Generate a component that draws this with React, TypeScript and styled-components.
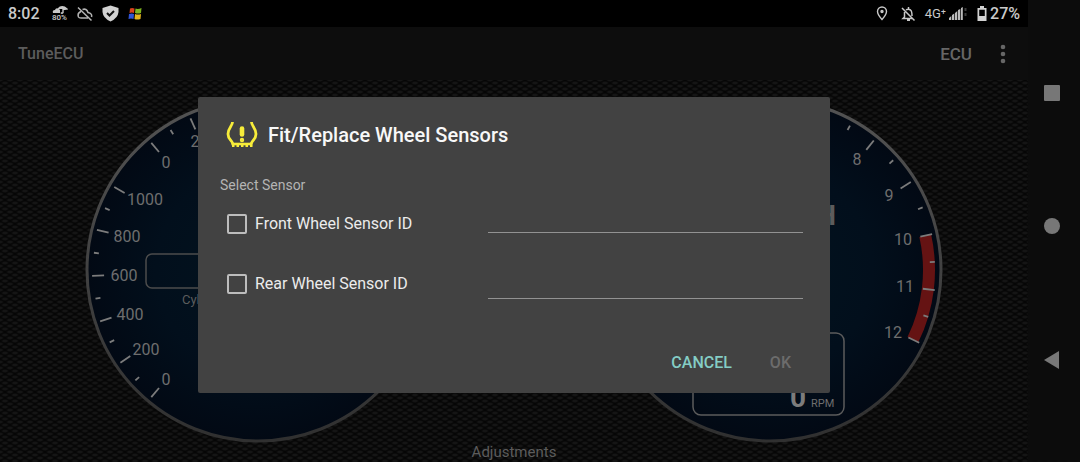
import React from "react";
import styled, { createGlobalStyle } from "styled-components";

const GlobalStyle = createGlobalStyle`
  *, *::before, *::after { box-sizing: border-box; }
  body {
    margin: 0;
    background: #0c0c0c;
    font-family: Roboto, "Liberation Sans", sans-serif;
  }
  button { font-family: inherit; }
`;

const Screen = styled.div`
  display: flex;
  min-height: 100vh;
`;

const AppArea = styled.div`
  flex: 1;
  min-width: 0;
  display: flex;
  flex-direction: column;
`;

const StatusBar = styled.header`
  display: flex;
  align-items: center;
  justify-content: space-between;
  height: 27px;
  padding: 0 8px;
  background: #000;
  color: #cacaca;
`;

const StatusGroup = styled.div<{ $gap: number }>`
  display: flex;
  align-items: center;
  gap: ${(p) => p.$gap}px;
`;

const StatusText = styled.span<{ $small?: boolean }>`
  font-size: ${(p) => (p.$small ? 13 : 16)}px;
  line-height: 20px;
  font-weight: ${(p) => (p.$small ? 400 : 500)};
`;

const Weather = styled.span`
  display: flex;
  flex-direction: column;
  align-items: center;
  font-size: 8px;
  line-height: 8px;
  font-weight: 500;
`;

const Signal = styled.span`
  display: flex;
  align-items: center;
  gap: 3px;
`;

const Body = styled.div`
  position: relative;
  flex: 1;
  display: flex;
  flex-direction: column;
`;

const Toolbar = styled.div`
  display: flex;
  align-items: center;
  justify-content: space-between;
  height: 53px;
  padding: 0 16px 0 18px;
  background: #0d0d0d;
`;

const AppTitle = styled.h1`
  margin: 0;
  font-size: 16px;
  line-height: 20px;
  font-weight: 500;
  color: #5c5c5c;
`;

const ToolbarActions = styled.div`
  display: flex;
  align-items: center;
  gap: 22px;
`;

const BareButton = styled.button`
  display: flex;
  align-items: center;
  padding: 0;
  border: 0;
  background: none;
  color: #666;
  font-size: 17px;
  line-height: 20px;
  font-weight: 500;
`;

const Dashboard = styled.main`
  flex: 1;
  display: flex;
  flex-direction: column;
  align-items: center;
  padding-top: 17px;
  background-color: #060606;
  background-image:
    radial-gradient(ellipse 4px 2px at 50% 50%, #151515 40%, transparent 100%),
    radial-gradient(ellipse 4px 2px at 50% 50%, #151515 40%, transparent 100%);
  background-size: 10px 6px;
  background-position: 0 0, 5px 3px;
`;

const Gauges = styled.div`
  display: flex;
  justify-content: center;
  gap: 166px;
`;

const Dial = styled.svg`
  display: block;
  flex: none;
  width: 346px;
  height: 346px;
  font-family: Roboto, sans-serif;
`;

const Caption = styled.p`
  margin: 0;
  font-size: 15px;
  line-height: 18px;
  color: #5c5c5c;
`;

const Overlay = styled.div`
  position: absolute;
  inset: 0;
  display: flex;
  align-items: center;
  justify-content: center;
`;

const Dialog = styled.form`
  display: flex;
  flex-direction: column;
  width: 632px;
  max-width: 96%;
  padding: 22px 27px 12px 22px;
  border-radius: 2px;
  background: #424242;
`;

const DialogHeader = styled.div`
  display: flex;
  align-items: center;
  gap: 10px;
  height: 32px;
  padding-left: 6px;
`;

const DialogTitle = styled.h2`
  margin: 0;
  font-size: 20px;
  line-height: 24px;
  font-weight: 500;
  color: #f8f8f8;
`;

const Hint = styled.p`
  margin: 24px 0 0;
  font-size: 14px;
  line-height: 20px;
  color: #b4b4b4;
`;

const Fields = styled.div`
  display: grid;
  grid-template-columns: 268px 1fr;
  margin-top: 9px;
`;

const FieldColumn = styled.div<{ $gap: number }>`
  display: flex;
  flex-direction: column;
  gap: ${(p) => p.$gap}px;
`;

const CheckLabel = styled.label`
  display: flex;
  align-items: center;
  gap: 8px;
  height: 40px;
  padding-left: 7px;
  font-size: 16px;
  line-height: 20px;
  color: #ececec;
`;

const CheckBox = styled.input`
  appearance: none;
  width: 20px;
  height: 20px;
  margin: 0;
  border: 2px solid #bdbdbd;
  border-radius: 2px;
  &:checked { background: #80cbc4; }
`;

const SensorInput = styled.input`
  width: 100%;
  height: 29px;
  padding: 0;
  border: 0;
  border-bottom: 1px solid #929292;
  outline: none;
  background: none;
  color: #ececec;
  font: 16px Roboto, sans-serif;
`;

const DialogActions = styled.div`
  display: flex;
  justify-content: flex-end;
  gap: 38px;
  margin-top: 41px;
  padding-right: 12px;
`;

const ActionButton = styled.button`
  height: 36px;
  padding: 0;
  border: 0;
  background: none;
  color: #84cdc5;
  font-size: 16px;
  line-height: 20px;
  font-weight: 500;
  &:disabled { color: #6c6c6c; }
`;

const NavBar = styled.nav`
  flex: none;
  display: flex;
  flex-direction: column;
  justify-content: space-between;
  align-items: center;
  width: 52px;
  padding: 82px 4px 90px 0;
  background: #0c0c0c;
`;

const NavButton = styled.button`
  display: flex;
  padding: 2px;
  border: 0;
  background: none;
`;

const C = 173;

function polar(deg: number, r: number) {
  const a = (deg * Math.PI) / 180;
  return { x: C + r * Math.cos(a), y: C - r * Math.sin(a) };
}

function Tick({ deg, minor }: { deg: number; minor?: boolean }) {
  const outer = polar(deg, minor ? 165 : 166);
  const inner = polar(deg, minor ? 160 : 154);
  return (
    <line x1={outer.x} y1={outer.y} x2={inner.x} y2={inner.y} stroke="#7c7c7c" strokeWidth="1.8" />
  );
}

type Mark = { text: string; x: number; y: number };

function Face({ id, major, minor, marks, children }: {
  id: string;
  major: number[];
  minor: number[];
  marks: Mark[];
  children?: React.ReactNode;
}) {
  return (
    <Dial viewBox="0 0 346 346" aria-hidden="true">
      <defs>
        <radialGradient id={id + "-face"}>
          <stop offset="0" stopColor="#02131f" />
          <stop offset="0.6" stopColor="#020f1c" />
          <stop offset="1" stopColor="#020914" />
        </radialGradient>
        <linearGradient id={id + "-rim"} x1="0" y1="0" x2="0" y2="1">
          <stop offset="0" stopColor="#535353" />
          <stop offset="1" stopColor="#303030" />
        </linearGradient>
      </defs>
      <circle cx={C} cy={C} r="171" fill={`url(#${id}-face)`} stroke={`url(#${id}-rim)`} strokeWidth="3" />
      {children}
      {major.map((d) => <Tick key={d} deg={d} />)}
      {minor.map((d) => <Tick key={d} deg={d} minor />)}
      {marks.map((m) => (
        <text key={m.text + m.y} x={m.x} y={m.y} fontSize="16" fill="#6e6e6e" textAnchor="middle">
          {m.text}
        </text>
      ))}
    </Dial>
  );
}

const leftMarks: Mark[] = [
  { text: "200", x: 119, y: 50 },
  { text: "0", x: 81, y: 71 },
  { text: "1000", x: 60, y: 108 },
  { text: "800", x: 42, y: 145 },
  { text: "600", x: 39, y: 184 },
  { text: "400", x: 45, y: 223 },
  { text: "200", x: 61, y: 258 },
  { text: "0", x: 81, y: 288 },
];

const rightMarks: Mark[] = [
  { text: "8", x: 260, y: 68 },
  { text: "9", x: 292, y: 104 },
  { text: "10", x: 306, y: 148 },
  { text: "11", x: 308, y: 195 },
  { text: "12", x: 296, y: 241 },
];

function RedZone() {
  const a = polar(12.5, 159);
  const b = polar(-26, 159);
  return (
    <path d={`M${a.x} ${a.y} A159 159 0 0 1 ${b.x} ${b.y}`} fill="none" stroke="#651313" strokeWidth="12" />
  );
}

function TyreIcon() {
  return (
    <svg width="32" height="30" viewBox="0 0 32 30" fill="none" stroke="#f7ec3a" aria-hidden="true">
      <path d="M6.500 2 C6.500 6 2 8 2 14 C2 19 5.500 20 7 24 M25.500 2 C25.500 6 30 8 30 14 C30 19 26.500 20 25 24" strokeWidth="2.800" />
      <path d="M5.500 24 H26.500" strokeWidth="2.600" />
      <path d="M6 26 H26.500" strokeWidth="2" strokeDasharray="2.500 2" />
      <path d="M16 8.500 V14.500" strokeWidth="4.600" strokeLinecap="round" />
      <circle cx="16" cy="20" r="1.200" strokeWidth="2" />
    </svg>
  );
}

const sensors = [
  { id: "front", label: "Front Wheel Sensor ID" },
  { id: "rear", label: "Rear Wheel Sensor ID" },
];

export default function App() {
  return (
    <>
      <GlobalStyle />
      <Screen>
        <AppArea>
          <StatusBar>
            <StatusGroup $gap={12}>
              <StatusText>8:02</StatusText>
              <StatusGroup $gap={9}>
                <Weather>
                  <svg width="16" height="8" viewBox="0 0 16 8" aria-hidden="true">
                    <path d="M1 7 Q0 4 3 4 Q4 1 7 3 L8 4 V7Z" fill="#c8c8c8" />
                    <path d="M6 3 Q10 -1.500 15 3 L11 3.500 V6.500 Q10 8 9 6.500" fill="none" stroke="#c8c8c8" strokeWidth="1.400" />
                    <path d="M6 3 Q10 -1.500 15 3Z" fill="#c8c8c8" />
                  </svg>
                  80%
                </Weather>
                <svg width="16" height="16" viewBox="0 0 16 16" fill="none" stroke="#b4b4b4" strokeWidth="1.500" aria-hidden="true">
                  <path d="M1 1.500 L14.500 14.500 M5.500 3.500 Q9.500 2 11 6.500 Q15.500 7.500 14.500 11 M4 5.500 Q0 7 1.500 11 Q2 12 4 12 H11" />
                </svg>
                <svg width="17" height="17" viewBox="0 0 17 17" aria-hidden="true">
                  <path d="M8.500 .500 L16.500 3 V7 Q16 13 8.500 16.500 Q1 13 .500 7 V3Z" fill="#d2d2d2" />
                  <path d="M5 8 L7.500 10.500 L12 6" fill="none" stroke="#111" strokeWidth="2" />
                </svg>
                <svg width="14" height="13" viewBox="0 0 14 13" aria-hidden="true">
                  <path d="M2 1.500 Q4 .500 6.500 1.500 L6 6 Q4 5 1.500 6Z" fill="#d8421d" />
                  <path d="M7.500 1.500 Q10 2.500 13.500 1 L13 6 Q10 7 7 6Z" fill="#7fb51f" />
                  <path d="M1 7 Q4 6 6 7 L5.500 12 Q3 11 .500 12Z" fill="#3154d6" />
                  <path d="M7 7 Q10 8 13 7 L12.500 12 Q9 13 6.500 12Z" fill="#e4b41d" />
                </svg>
              </StatusGroup>
            </StatusGroup>
            <StatusGroup $gap={9}>
              <StatusGroup $gap={13}>
                <svg width="12" height="15" viewBox="0 0 12 15" fill="none" stroke="#c8c8c8" strokeWidth="1.400" aria-hidden="true">
                  <path d="M6 13.500 Q1.500 8.500 1.500 5.500 A4.500 4.500 0 0 1 10.500 5.500 Q10.500 8.500 6 13.500Z" />
                  <circle cx="6" cy="5.500" r="1" fill="#c8c8c8" />
                </svg>
                <svg width="15" height="16" viewBox="0 0 15 16" fill="none" stroke="#c8c8c8" strokeWidth="1.500" aria-hidden="true">
                  <path d="M1 2 L13.500 14.500 M5 4 Q7 2.500 9.500 4 Q11 5 11 10 M3.500 6 V11 L2 12.500 H11 M7.500 1 V3" />
                  <path d="M6 14 H9" strokeWidth="2" />
                </svg>
              </StatusGroup>
              <Signal>
                <StatusText $small>4G⁺</StatusText>
                <svg width="19" height="15" viewBox="0 0 19 15" aria-hidden="true">
                  <path d="M0 14 V12 L2.300 10 V14Z M3 14 V9 L5.300 7.500 V14Z M6 14 V7 L8.300 5 V14Z M9 14 V4 L11.300 3 V14Z M12 14 V2 L13.800 1 V14Z" fill="#bcbcbc" />
                  <path d="M16.500 2 V5 M16.500 7 V10" stroke="#3c3c3c" strokeWidth="2" />
                </svg>
              </Signal>
              <Signal>
                <svg width="10" height="15" viewBox="0 0 10 15" aria-hidden="true">
                  <path d="M3 0 H7 V2 H9.500 V15 H.500 V2 H3Z M2.200 3.700 V10 H7.800 V3.700Z" fill="#d2d2d2" fillRule="evenodd" />
                </svg>
                <StatusText>27%</StatusText>
              </Signal>
            </StatusGroup>
          </StatusBar>
          <Body>
            <Toolbar>
              <AppTitle>TuneECU</AppTitle>
              <ToolbarActions>
                <BareButton type="button">ECU</BareButton>
                <BareButton type="button" aria-label="More options">
                  <svg width="18" height="20" viewBox="0 0 18 20" fill="#666">
                    <circle cx="9" cy="3" r="2.300" />
                    <circle cx="9" cy="10" r="2.300" />
                    <circle cx="9" cy="17" r="2.300" />
                  </svg>
                </BareButton>
              </ToolbarActions>
            </Toolbar>
            <Dashboard>
              <Gauges>
                <Face
                  id="pressure"
                  major={[114, 130, 150, 166, 182, 198, 214, 230]}
                  minor={[122, 158, 174, 190, 206, 222]}
                  marks={leftMarks}
                >
                  <rect x="61" y="157" width="224" height="34" rx="6" fill="none" stroke="#4c4c4c" strokeWidth="1.500" />
                  <text x="97" y="207" fontSize="13" fill="#5c5c5c">Cylinder</text>
                </Face>
                <Face
                  id="rpm"
                  major={[51.3, 32, 12.5, -7, -26]}
                  minor={[61, 41.7, 22.3, 2.8, -16.5]}
                  marks={rightMarks}
                >
                  <RedZone />
                  <text x="239" y="128" fontSize="28" fontWeight="700" fill="#5c5c5c" textAnchor="end">H</text>
                  <rect x="96" y="236" width="151" height="82" rx="8" fill="none" stroke="#5c5c5c" strokeWidth="1.500" />
                  <text x="193" y="310" fontSize="28" fontWeight="700" fill="#7c7c7c">0</text>
                  <text x="214" y="310" fontSize="11" fill="#6e6e6e">RPM</text>
                </Face>
              </Gauges>
              <Caption>Adjustments</Caption>
            </Dashboard>
            <Overlay>
              <Dialog role="dialog" aria-labelledby="dialog-title">
                <DialogHeader>
                  <TyreIcon />
                  <DialogTitle id="dialog-title">Fit/Replace Wheel Sensors</DialogTitle>
                </DialogHeader>
                <Hint>Select Sensor</Hint>
                <Fields>
                  <FieldColumn $gap={20}>
                    {sensors.map((s) => (
                      <CheckLabel key={s.id}>
                        <CheckBox type="checkbox" name={s.id} />
                        {s.label}
                      </CheckLabel>
                    ))}
                  </FieldColumn>
                  <FieldColumn $gap={37}>
                    {sensors.map((s) => (
                      <SensorInput key={s.id} type="text" name={s.id + "-id"} aria-label={s.label} />
                    ))}
                  </FieldColumn>
                </Fields>
                <DialogActions>
                  <ActionButton type="button">CANCEL</ActionButton>
                  <ActionButton type="button" disabled>OK</ActionButton>
                </DialogActions>
              </Dialog>
            </Overlay>
          </Body>
        </AppArea>
        <NavBar>
          <NavButton type="button" aria-label="Recent apps">
            <svg width="18" height="18"><rect x="1" y="1" width="16" height="16" rx="1" fill="#777" /></svg>
          </NavButton>
          <NavButton type="button" aria-label="Home">
            <svg width="18" height="18"><circle cx="9" cy="9" r="8" fill="#777" /></svg>
          </NavButton>
          <NavButton type="button" aria-label="Back">
            <svg width="18" height="20"><path d="M1 10 L16 1 V19Z" fill="#777" /></svg>
          </NavButton>
        </NavBar>
      </Screen>
    </>
  );
}
